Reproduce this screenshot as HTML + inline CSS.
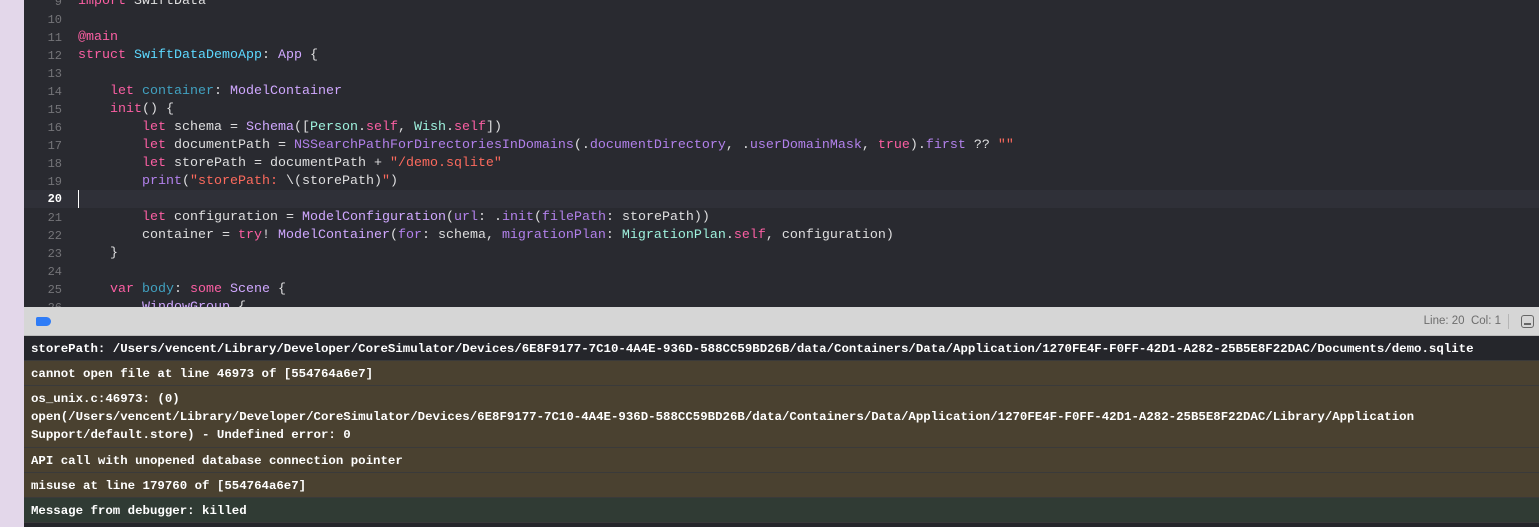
<!DOCTYPE html>
<html><head><meta charset="utf-8"><style>
*{margin:0;padding:0;box-sizing:border-box}
body{width:1539px;height:527px;overflow:hidden;background:#292a30;position:relative;font-family:"Liberation Mono",monospace}
#strip{position:absolute;left:0;top:0;width:24px;height:527px;background:#e3d7ea}
#ed{position:absolute;left:24px;top:0;width:1515px;height:307px;background:#292a30;overflow:hidden}
#in{position:absolute;left:0;top:2px;width:100%;height:320px}
.ln{position:absolute;left:0;height:18px;width:100%;font-size:13.33px;line-height:18px;color:#dfdfe0;white-space:pre}
.ln .n{position:absolute;left:0;width:38px;text-align:right;color:#747478;font-size:12px}
.ln .c{position:absolute;left:54px}
.cur{background:#2f3038}
.k{color:#fc5fa3}.t{color:#5dd8ff}.p{color:#d0a8ff}.m{color:#b281eb}.s{color:#fc6a5d}.g{color:#9ef1dd}.v{color:#41a1c0}
#tb{position:absolute;left:24px;top:307px;width:1515px;height:29px;background:#d6d6d6;border-bottom:1px solid #bbb}
#con{position:absolute;left:24px;top:336px;width:1515px;height:191px;background:#25262b}
.r{position:absolute;left:0;width:100%;font-size:12.4px;font-weight:bold;color:#fff;line-height:18px;padding:4px 7px;white-space:pre;border-bottom:1px solid #3a3a3a}
.b{background:#4a4130}
.gr{background:#303b34}
</style></head><body>
<div id="strip"></div>
<div id="ed"><div id="in">
<div class="ln" style="top:-9px"><span class="n">9</span><span class="c"><span class="k">import</span> SwiftData</span></div>
<div class="ln" style="top:9px"><span class="n">10</span></div>
<div class="ln" style="top:27px"><span class="n">11</span><span class="c"><span class="k">@main</span></span></div>
<div class="ln" style="top:45px"><span class="n">12</span><span class="c"><span class="k">struct</span> <span class="t">SwiftDataDemoApp</span>: <span class="p">App</span> {</span></div>
<div class="ln" style="top:63px"><span class="n">13</span></div>
<div class="ln" style="top:81px"><span class="n">14</span><span class="c">    <span class="k">let</span> <span class="v">container</span>: <span class="p">ModelContainer</span></span></div>
<div class="ln" style="top:99px"><span class="n">15</span><span class="c">    <span class="k">init</span>() {</span></div>
<div class="ln" style="top:117px"><span class="n">16</span><span class="c">        <span class="k">let</span> schema = <span class="p">Schema</span>([<span class="g">Person</span>.<span class="k">self</span>, <span class="g">Wish</span>.<span class="k">self</span>])</span></div>
<div class="ln" style="top:135px"><span class="n">17</span><span class="c">        <span class="k">let</span> documentPath = <span class="m">NSSearchPathForDirectoriesInDomains</span>(.<span class="m">documentDirectory</span>, .<span class="m">userDomainMask</span>, <span class="k">true</span>).<span class="m">first</span> ?? <span class="s">""</span></span></div>
<div class="ln" style="top:153px"><span class="n">18</span><span class="c">        <span class="k">let</span> storePath = documentPath + <span class="s">"/demo.sqlite"</span></span></div>
<div class="ln" style="top:171px"><span class="n">19</span><span class="c">        <span class="m">print</span>(<span class="s">"storePath: </span>\(storePath)<span class="s">"</span>)</span></div>
<div class="ln cur" style="top:188px"><span class="n" style="color:#fff;font-weight:bold">20</span><span class="c" style="border-left:1px solid #fff;height:18px;left:54px"></span></div>
<div class="ln" style="top:207px"><span class="n">21</span><span class="c">        <span class="k">let</span> configuration = <span class="p">ModelConfiguration</span>(<span class="m">url</span>: .<span class="m">init</span>(<span class="m">filePath</span>: storePath))</span></div>
<div class="ln" style="top:225px"><span class="n">22</span><span class="c">        container = <span class="k">try</span>! <span class="p">ModelContainer</span>(<span class="m">for</span>: schema, <span class="m">migrationPlan</span>: <span class="g">MigrationPlan</span>.<span class="k">self</span>, configuration)</span></div>
<div class="ln" style="top:243px"><span class="n">23</span><span class="c">    }</span></div>
<div class="ln" style="top:261px"><span class="n">24</span></div>
<div class="ln" style="top:279px"><span class="n">25</span><span class="c">    <span class="k">var</span> <span class="v">body</span>: <span class="k">some</span> <span class="p">Scene</span> {</span></div>
<div class="ln" style="top:297px"><span class="n">26</span><span class="c">        <span class="p">WindowGroup</span> {</span></div>
</div></div>
<div id="tb">
<div style="position:absolute;left:12px;top:10px;width:15px;height:9px;background:#2f7cf6;border-radius:2px 5px 5px 2px"></div>
<div style="position:absolute;right:38px;top:8px;font-family:'Liberation Sans',sans-serif;font-size:11.5px;color:#6d6d6d">Line: 20&nbsp; Col: 1</div>
<div style="position:absolute;right:30px;top:7px;width:1px;height:15px;background:#b5b5b5"></div>
<div style="position:absolute;right:5px;top:8px;width:13px;height:13px;border:1.3px solid #666;border-radius:3px"><div style="position:absolute;left:2px;right:2px;bottom:2px;height:2px;background:#666"></div></div>
</div>
<div id="con">
<div class="r" style="top:0;height:25px">storePath: /Users/vencent/Library/Developer/CoreSimulator/Devices/6E8F9177-7C10-4A4E-936D-588CC59BD26B/data/Containers/Data/Application/1270FE4F-F0FF-42D1-A282-25B5E8F22DAC/Documents/demo.sqlite</div>
<div class="r b" style="top:25px;height:25px">cannot open file at line 46973 of [554764a6e7]</div>
<div class="r b" style="top:50px;height:62px">os_unix.c:46973: (0)
open(/Users/vencent/Library/Developer/CoreSimulator/Devices/6E8F9177-7C10-4A4E-936D-588CC59BD26B/data/Containers/Data/Application/1270FE4F-F0FF-42D1-A282-25B5E8F22DAC/Library/Application
Support/default.store) - Undefined error: 0</div>
<div class="r b" style="top:112px;height:25px">API call with unopened database connection pointer</div>
<div class="r b" style="top:137px;height:25px">misuse at line 179760 of [554764a6e7]</div>
<div class="r gr" style="top:162px;height:25px">Message from debugger: killed</div>
</div>
</body></html>
